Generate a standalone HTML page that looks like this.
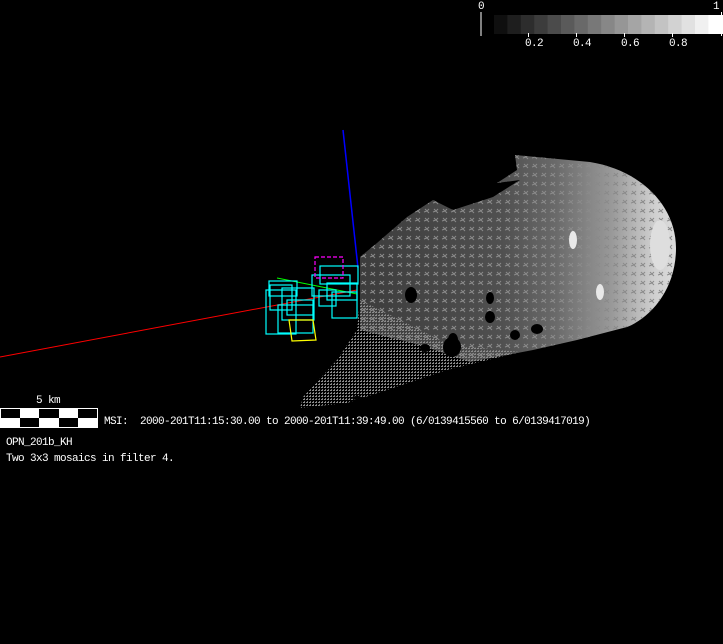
<!DOCTYPE html>
<html><head><meta charset="utf-8"><style>
html,body{margin:0;padding:0;background:#000;}
body{width:723px;height:644px;position:relative;overflow:hidden;font-family:"Liberation Mono",monospace;font-size:11px;letter-spacing:-0.6px;color:#fff;}
.t{position:absolute;white-space:pre;line-height:12px;}
</style></head><body>
<svg width="723" height="644" style="position:absolute;left:0;top:0">
<defs>
<linearGradient id="g" x1="360" y1="0" x2="676" y2="0" gradientUnits="userSpaceOnUse">
<stop offset="0" stop-color="#3c3c3c"/>
<stop offset="0.45" stop-color="#505050"/>
<stop offset="0.62" stop-color="#6a6a6a"/>
<stop offset="0.8" stop-color="#9a9a9a"/>
<stop offset="0.93" stop-color="#cfcfcf"/>
<stop offset="1" stop-color="#dcdcdc"/>
</linearGradient>
<pattern id="p" width="9" height="9" patternUnits="userSpaceOnUse">
<path d="M2 2 L6 6 M6 2 L4 4 M1 5 L4 4" stroke="#8a8a8a" stroke-width="1" fill="none"/>
</pattern>
<pattern id="d" width="3" height="3" patternUnits="userSpaceOnUse">
<rect x="0" y="0" width="2" height="1" fill="#8c8c8c"/>
<rect x="1" y="2" width="1" height="1" fill="#7a7a7a"/>
</pattern>
</defs>
<path fill="url(#g)" d="M515,155 L590,162 C640,170 676,205 676,248 C676,290 650,318 627,327 L577,340 L533,350 L470,362 L420,345 L360,330 L360,257 L377,243 L407,217 L433,200 L453,210 L493,197 L520,180 L497,183 L517,170 Z"/>
<path fill="url(#p)" d="M515,155 L590,162 C640,170 676,205 676,248 C676,290 650,318 627,327 L577,340 L533,350 L470,362 L420,345 L360,330 L360,257 L377,243 L407,217 L433,200 L453,210 L493,197 L520,180 L497,183 L517,170 Z"/>
<polygon fill="url(#d)" points="360,300 400,320 450,345 520,352 447,370 387,390 347,403 300,408 303,397 337,360 357,330"/>
<ellipse cx="411" cy="295" rx="6" ry="8" fill="#000"/>
<ellipse cx="452" cy="347" rx="9" ry="10" fill="#000"/>
<ellipse cx="453" cy="340" rx="5" ry="7" fill="#000"/>
<ellipse cx="490" cy="317" rx="5" ry="6" fill="#000"/>
<ellipse cx="425" cy="348" rx="5" ry="4" fill="#000"/>
<ellipse cx="515" cy="335" rx="5" ry="5" fill="#000"/>
<ellipse cx="537" cy="329" rx="6" ry="5" fill="#000"/>
<ellipse cx="490" cy="298" rx="4" ry="6" fill="#000"/>
<ellipse cx="357" cy="398" rx="5" ry="2" fill="#000"/>
<ellipse cx="573" cy="240" rx="4" ry="9" fill="#e8e8e8"/>
<ellipse cx="600" cy="292" rx="4" ry="8" fill="#e8e8e8"/>
<ellipse cx="660" cy="245" rx="10" ry="25" fill="#dedede"/>
<line x1="343" y1="130" x2="358" y2="268" stroke="#00f" stroke-width="1.5"/>
<line x1="0" y1="357" x2="357" y2="290" stroke="#f00" stroke-width="1"/>
<line x1="277" y1="278" x2="357" y2="294" stroke="#0f0" stroke-width="1"/>
<g fill="none" stroke="#0ff" stroke-width="1.2">
<rect x="320" y="266" width="38" height="18"/>
<rect x="312" y="275" width="38" height="21"/>
<rect x="327" y="283" width="30" height="17"/>
<rect x="332" y="292" width="25" height="26"/>
<rect x="319" y="290" width="17" height="16"/>
<rect x="269" y="281" width="28" height="15"/>
<rect x="270" y="285" width="22" height="25"/>
<rect x="266" y="290" width="30" height="44"/>
<rect x="282" y="288" width="32" height="32"/>
<rect x="278" y="305" width="35" height="28"/>
<rect x="287" y="300" width="26" height="15"/>
</g>
<rect x="315" y="257" width="28" height="21" fill="none" stroke="#f0f" stroke-width="1.2" stroke-dasharray="4,2"/>
<polygon points="289,320 313,320 316,340 292,341" fill="none" stroke="#ff0" stroke-width="1.2"/>
<line x1="481" y1="12" x2="481" y2="36" stroke="#fff"/>
<g>
<rect x="494" y="15" width="14" height="19" fill="#0f0f0f"/>
<rect x="507.4" y="15" width="14" height="19" fill="#1e1e1e"/>
<rect x="520.8" y="15" width="14" height="19" fill="#2d2d2d"/>
<rect x="534.2" y="15" width="14" height="19" fill="#3c3c3c"/>
<rect x="547.6" y="15" width="14" height="19" fill="#4b4b4b"/>
<rect x="561" y="15" width="14" height="19" fill="#5a5a5a"/>
<rect x="574.4" y="15" width="14" height="19" fill="#696969"/>
<rect x="587.8" y="15" width="14" height="19" fill="#787878"/>
<rect x="601.2" y="15" width="14" height="19" fill="#878787"/>
<rect x="614.6" y="15" width="14" height="19" fill="#969696"/>
<rect x="628" y="15" width="14" height="19" fill="#a5a5a5"/>
<rect x="641.4" y="15" width="14" height="19" fill="#b4b4b4"/>
<rect x="654.8" y="15" width="14" height="19" fill="#c3c3c3"/>
<rect x="668.2" y="15" width="14" height="19" fill="#d2d2d2"/>
<rect x="681.6" y="15" width="14" height="19" fill="#e1e1e1"/>
<rect x="695" y="15" width="14" height="19" fill="#f0f0f0"/>
<rect x="708.4" y="15" width="14.6" height="19" fill="#ffffff"/>
</g>
<line x1="721.5" y1="12" x2="721.5" y2="36" stroke="#fff"/>
<g stroke="#fff"><line x1="528.5" y1="33" x2="528.5" y2="37"/><line x1="576.5" y1="33" x2="576.5" y2="37"/><line x1="624.5" y1="33" x2="624.5" y2="37"/><line x1="672.5" y1="33" x2="672.5" y2="37"/></g>
<rect x="0" y="408" width="98" height="20" fill="#fff"/>
<rect x="1" y="409" width="19" height="9" fill="#000"/>
<rect x="39" y="409" width="20" height="9" fill="#000"/>
<rect x="78" y="409" width="19" height="9" fill="#000"/>
<rect x="20" y="418" width="19" height="9" fill="#000"/>
<rect x="59" y="418" width="19" height="9" fill="#000"/>
</svg>
<div class="t" style="left:478px;top:1px">0</div>
<div class="t" style="left:713px;top:1px">1</div>
<div class="t" style="left:525px;top:38px">0.2</div>
<div class="t" style="left:573px;top:38px">0.4</div>
<div class="t" style="left:621px;top:38px">0.6</div>
<div class="t" style="left:669px;top:38px">0.8</div>
<div class="t" style="left:36px;top:395px">5 km</div>
<div class="t" style="left:104px;top:416px">MSI:  2000-201T11:15:30.00 to 2000-201T11:39:49.00 (6/0139415560 to 6/0139417019)</div>
<div class="t" style="left:6px;top:437px">OPN_201b_KH</div>
<div class="t" style="left:6px;top:453px">Two 3x3 mosaics in filter 4.</div>
</body></html>
